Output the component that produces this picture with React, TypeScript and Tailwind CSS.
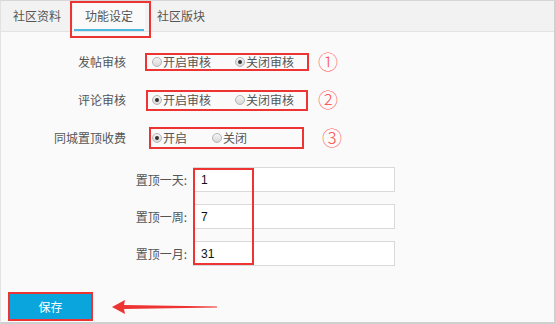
import React from "react";

const font = { fontFamily: '"Noto Sans CJK SC", "Noto Sans", sans-serif' };

function Radio({ checked }: { checked?: boolean }) {
  return (
    <span className="relative inline-flex h-[10px] w-[10px] shrink-0 items-center justify-center rounded-full border border-[#b5b5b5] bg-gradient-to-b from-[#f4f4f4] to-[#d8d8d8]">
      {checked && <span className="h-[4px] w-[4px] rounded-full bg-[#333]" />}
    </span>
  );
}

function Tab({ label, active }: { label: string; active?: boolean }) {
  return (
    <div
      className={
        "relative flex h-full items-center px-[12px] text-[12px] text-[#555] " +
        (active ? "bg-[#fafafa]" : "")
      }
    >
      {label}
      {active && <span className="absolute bottom-[0px] left-[1px] right-[1px] h-[2px] bg-[#4db8e2]" />}
    </div>
  );
}

function Num({ children, ml }: { children: React.ReactNode; ml: string }) {
  return (
    <span className={ml + " text-[20px] font-light leading-none text-[#ff5a5a]"}>{children}</span>
  );
}

export default function App() {
  return (
    <div
      style={font}
      className="relative flex h-[324px] w-[556px] flex-col overflow-hidden border-t border-l border-r-2 border-b-2 border-t-[#d6d6d6] border-l-[#e2e2e2] border-r-[#d0d0d0] border-b-[#d0d0d0] bg-[#fafafa]"
    >
      {/* Tabs */}
      <div className="flex h-[31px] shrink-0 border-b border-[#e3e3e3] bg-[#f2f2f2]">
        <Tab label="社区资料" />
        <Tab label="功能设定" active />
        <Tab label="社区版块" />
      </div>
      <div className="pointer-events-none absolute left-[69px] top-[0px] h-[37px] w-[81px] border-2 border-[#ee3333]" />

      {/* Content */}
      <div className="relative flex flex-1 flex-col pt-[11px]">
        {/* Row 1 */}
        <div className="flex h-[38px] items-center text-[12px] text-[#555]">
          <div className="w-[125px] text-right">发帖审核</div>
          <div className="ml-[19px] flex h-[18px] w-[164px] items-center border-2 border-[#ee3333] pl-[5px]">
            <Radio />
            <span className="ml-[1px]">开启审核</span>
            <span className="ml-[24px]" />
            <Radio checked />
            <span className="ml-[1px]">关闭审核</span>
          </div>
          <Num ml="ml-[9px]">①</Num>
        </div>
        {/* Row 2 */}
        <div className="flex h-[38px] items-center text-[12px] text-[#555]">
          <div className="w-[125px] text-right">评论审核</div>
          <div className="ml-[20px] flex h-[21px] w-[162px] items-center border-2 border-[#ee3333] pl-[4px]">
            <Radio checked />
            <span className="ml-[1px]">开启审核</span>
            <span className="ml-[24px]" />
            <Radio />
            <span className="ml-[1px]">关闭审核</span>
          </div>
          <Num ml="ml-[10px]">②</Num>
        </div>
        {/* Row 3 */}
        <div className="flex h-[38px] items-center text-[12px] text-[#555]">
          <div className="w-[125px] text-right">同城置顶收费</div>
          <div className="ml-[23px] flex h-[22px] w-[155px] items-center border-2 border-[#ee3333] pl-[1px]">
            <Radio checked />
            <span className="ml-[1px]">开启</span>
            <span className="ml-[25px]" />
            <Radio />
            <span className="ml-[1px]">关闭</span>
          </div>
          <Num ml="ml-[18px]">③</Num>
        </div>

        {/* Inputs */}
        <div className="relative mt-[10px] flex flex-col gap-[12px] text-[12px]">
          {[
            ["置顶一天:", "1"],
            ["置顶一周:", "7"],
            ["置顶一月:", "31"],
          ].map(([label, value]) => (
            <div key={label} className="flex h-[25px] items-center">
              <div className="w-[186px] text-right text-[#555]">{label}</div>
              <div
                className="ml-[6px] flex h-[25px] w-[202px] items-center border border-[#d9d9d9] bg-white pl-[7px] text-[12px] text-[#111]"
                style={{ fontFamily: '"Liberation Sans", "Noto Sans", sans-serif' }}
              >
                {value}
              </div>
            </div>
          ))}
          <div className="pointer-events-none absolute left-[192px] top-[1px] h-[97px] w-[61px] border-2 border-[#ee3333]" />
        </div>

        {/* Save */}
        <div className="mt-auto mb-[1px] flex items-center pl-[7px]">
          <button className="flex h-[29px] w-[85px] items-center justify-center border-2 border-[#ee3333] bg-[#0aa5dd] text-[12px] text-white">
            保存
          </button>
          <svg width="110" height="16" viewBox="0 0 110 16" className="ml-[19px]">
            <polygon points="0,8 13,1 12,6 105,7.5 105,8.5 12,10 13,15" fill="#ee3333" />
          </svg>
        </div>
      </div>
    </div>
  );
}
